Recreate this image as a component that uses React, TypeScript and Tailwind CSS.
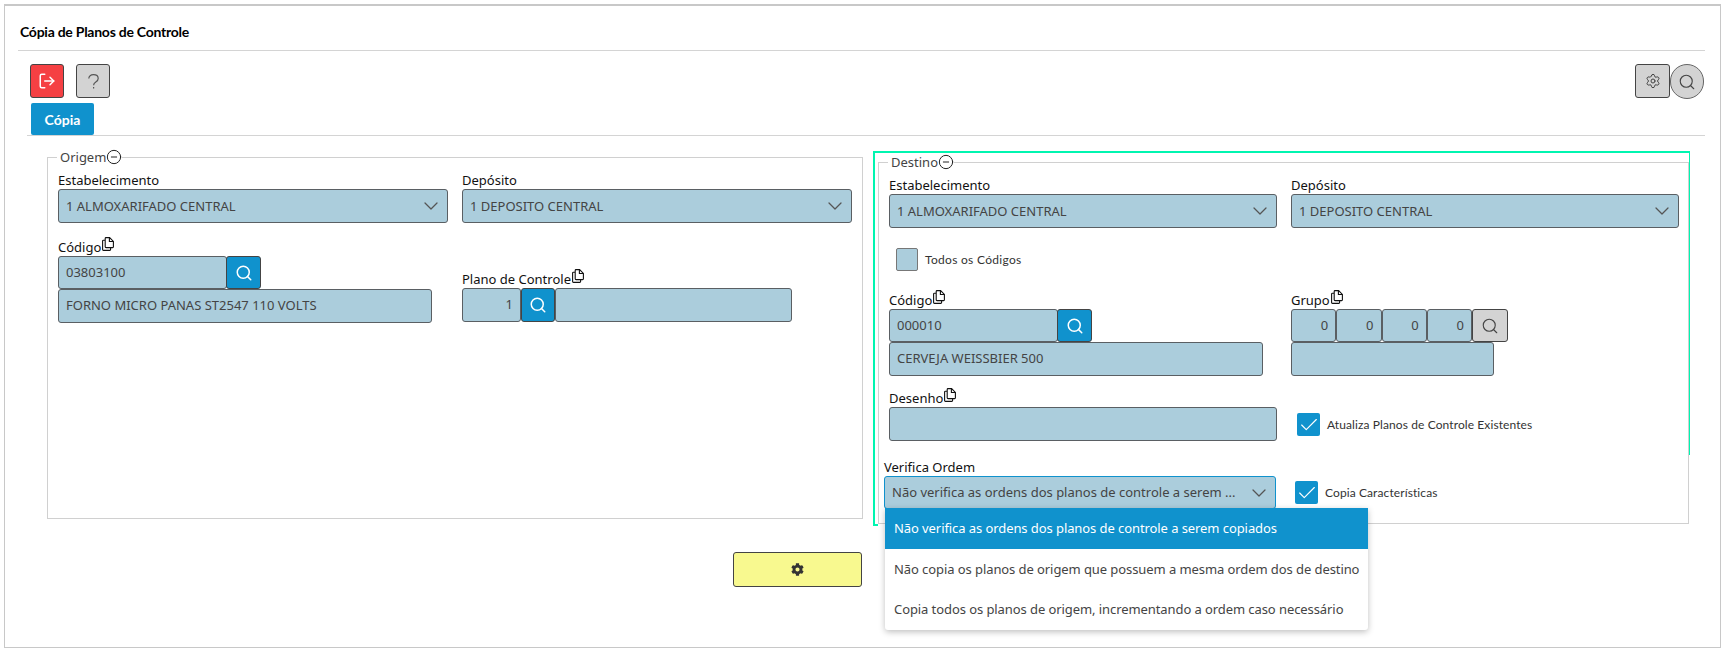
import { ChevronDown, CircleMinus, LogOut, Search, Settings, Check } from "lucide-react";
import { FaCog } from "react-icons/fa";
import type { ReactNode } from "react";

const inputBase =
  "flex shrink-0 items-center border border-[#5a5f63] bg-[#abcddc] text-[13px] text-[#444] rounded-[3px] px-[7px]";

function CopyIcon() {
  return (
    <svg viewBox="0 0 12 14" className="mb-[5px] ml-[1px] h-[14px] w-[12px]" fill="none" stroke="#111" strokeWidth="1.1">
      <path d="M3 3.2H1.4a.8.8 0 0 0-.8.8v8.6a.8.8 0 0 0 .8.8h6.4a.8.8 0 0 0 .8-.8v-1.8" />
      <path d="M3.2 1.4a.8.8 0 0 1 .8-.8h3.6l3.8 3.8v5.4a.8.8 0 0 1-.8.8H4a.8.8 0 0 1-.8-.8Z" />
      <path d="M7.4.6v3.9h3.9" />
    </svg>
  );
}

function Label({ children, copy }: { children: ReactNode; copy?: boolean }) {
  return (
    <div className="flex h-[18px] items-end text-[13px] leading-[18px] text-[#111]">
      <span>{children}</span>
      {copy && <CopyIcon />}
    </div>
  );
}

function SelectBox({ value, width }: { value: string; width: string }) {
  return (
    <div className={`${inputBase} ${width} h-[34px] justify-between`}>
      <span className="pt-[1px]">{value}</span>
      <ChevronDown className="-mr-[3px] h-[24px] w-[24px] text-[#555]" strokeWidth={1.25} />
    </div>
  );
}

function SearchButton({ className }: { className: string }) {
  return (
    <div
      className={`flex shrink-0 items-center justify-center rounded-[3px] border border-[#444] bg-[#1092cd] text-white ${className}`}
    >
      <Search className="h-[18px] w-[18px]" strokeWidth={2} />
    </div>
  );
}

function CheckRow({
  label,
  checked,
  className,
  textClass = "tracking-[0.1px]",
}: {
  label: string;
  checked?: boolean;
  className: string;
  textClass?: string;
}) {
  return (
    <div className={`flex items-center gap-[7px] font-['Lato',sans-serif] text-[12px] text-[#333] ${className}`}>
      {checked ? (
        <div className="flex h-[23px] w-[23px] items-center justify-center rounded-[2px] bg-[#1092cd]">
          <Check className="h-[22px] w-[22px] text-white" strokeWidth={1.25} />
        </div>
      ) : (
        <div className="h-[23px] w-[22px] rounded-[2px] border border-[#777] bg-[#abcddc]" />
      )}
      <span className={textClass}>{label}</span>
    </div>
  );
}

function Legend({ children }: { children: string }) {
  return (
    <legend className="-ml-px flex h-[16px] items-center pl-[3px] text-[13px] leading-[16px] text-[#444]">
      <span>{children}</span>
      <CircleMinus className="h-[16px] w-[16px] text-[#222]" strokeWidth={1.5} />
    </legend>
  );
}

export default function App() {
  return (
    <div className="relative h-[651px] w-[1723px] overflow-hidden bg-white pl-[4px] pt-[4px] font-['Noto_Sans',sans-serif]">
      <div className="h-[644px] w-[1717px] border border-t-2 border-[#c8c8c8]">
        <div className="ml-[13px] mr-[15px] flex h-[45px] items-center border-b border-[#d4d4d4] pl-[2px] pt-[7px] font-['Lato',sans-serif] text-[14px] font-bold tracking-[-0.25px] text-black">
          Cópia de Planos de Controle
        </div>

        <div className="mt-[13px] flex h-[34px] justify-between pl-[25px] pr-[16px]">
          <div className="flex gap-[12px]">
            <div className="flex h-[34px] w-[34px] items-center justify-center rounded-[3px] border border-[#444] bg-[#f54043] text-white">
              <LogOut className="h-[18px] w-[18px]" strokeWidth={2} />
            </div>
            <div className="flex h-[34px] w-[34px] items-center justify-center rounded-[3px] border border-[#444] bg-[#d3d3d3]">
              <svg viewBox="0 0 11 15" className="h-[15px] w-[11px]" fill="none" stroke="#555" strokeWidth="1.2">
                <path d="M.8 4.4C.8 2 2.8.7 5.4.7c2.7 0 4.8 1.5 4.8 3.7 0 1.8-1 2.6-2.4 3.5C6.300 8.900 5.600 9.700 5.600 11.200" />
                <path d="M5.600 13v1.500" />
              </svg>
            </div>
          </div>
          <div className="flex">
            <div className="flex h-[34px] w-[35px] items-center justify-center rounded-[3px] border border-[#444] bg-[#d3d3d3] text-[#444]">
              <Settings className="h-[16px] w-[16px]" strokeWidth={1.5} />
            </div>
            <div className="flex h-[35px] w-[34px] items-center justify-center rounded-full border border-[#666] bg-[#d3d3d3] text-[#444]">
              <Search className="h-[18px] w-[18px]" strokeWidth={1.5} />
            </div>
          </div>
        </div>

        <div className="ml-[22px] mr-[15px] mt-[5px] h-[33px] border-b border-[#d4d4d4] pl-[4px]">
          <div className="flex h-[32px] w-[63px] items-center justify-center rounded-[2px] bg-[#1092cd] font-['Lato',sans-serif] text-[14px] font-bold text-white">
            Cópia
          </div>
        </div>

        <div className="relative ml-[42px] mt-[13px] flex items-start gap-[15px]">
          {/* Origem */}
          <fieldset className="h-[370px] w-[816px] border border-[#d0d0d0] pl-[10px]">
            <Legend>Origem</Legend>
            <div className="mt-[6px] flex gap-[14px]">
              <div>
                <Label>Estabelecimento</Label>
                <SelectBox value="1 ALMOXARIFADO CENTRAL" width="w-[390px]" />
              </div>
              <div>
                <Label>Depósito</Label>
                <SelectBox value="1 DEPOSITO CENTRAL" width="w-[390px]" />
              </div>
            </div>
            <div className="mt-[13px] flex">
              <div className="w-[404px]">
                <div className="mt-[2px]">
                  <Label copy>Código</Label>
                </div>
                <div className="flex">
                  <div className={`${inputBase} h-[33px] w-[169px]`}>03803100</div>
                  <SearchButton className="-ml-px h-[33px] w-[35px]" />
                </div>
                <div className={`${inputBase} h-[34px] w-[374px]`}>FORNO MICRO PANAS ST2547 110 VOLTS</div>
              </div>
              <div className="pt-[34px]">
                <Label copy>Plano de Controle</Label>
                <div className="flex">
                  <div className={`${inputBase} h-[34px] w-[59px] justify-end`}>1</div>
                  <SearchButton className="h-[34px] w-[34px]" />
                  <div className={`${inputBase} h-[34px] w-[237px]`} />
                </div>
              </div>
            </div>
          </fieldset>

          {/* Destino */}
          <fieldset className="mt-[5px] h-[370px] w-[811px] border border-[#d0d0d0] pl-[10px]">
            <Legend>Destino</Legend>
            <div className="mt-[6px] flex gap-[14px]">
              <div>
                <Label>Estabelecimento</Label>
                <SelectBox value="1 ALMOXARIFADO CENTRAL" width="w-[388px]" />
              </div>
              <div>
                <Label>Depósito</Label>
                <SelectBox value="1 DEPOSITO CENTRAL" width="w-[388px]" />
              </div>
            </div>
            <CheckRow label="Todos os Códigos" className="ml-[7px] mt-[20px]" textClass="tracking-[0.3px]" />
            <div className="mt-[20px] flex">
              <div className="w-[402px]">
                <Label copy>Código</Label>
                <div className="flex">
                  <div className={`${inputBase} h-[33px] w-[169px]`}>000010</div>
                  <SearchButton className="-ml-px h-[33px] w-[35px]" />
                </div>
                <div className={`${inputBase} h-[34px] w-[374px]`}>CERVEJA WEISSBIER 500</div>
              </div>
              <div>
                <Label copy>Grupo</Label>
                <div className="flex">
                  {["a", "b", "c", "d"].map((k) => (
                    <div key={k} className={`${inputBase} h-[33px] w-[45.25px] justify-end`}>
                      0
                    </div>
                  ))}
                  <div className="flex h-[33px] w-[36px] items-center justify-center rounded-[3px] border border-[#444] bg-[#d3d3d3] text-[#444]">
                    <Search className="h-[18px] w-[18px]" strokeWidth={1.5} />
                  </div>
                </div>
                <div className={`${inputBase} h-[34px] w-[203px]`} />
              </div>
            </div>
            <div className="mt-[13px] flex items-end">
              <div>
                <Label copy>Desenho</Label>
                <div className={`${inputBase} h-[34px] w-[388px]`} />
              </div>
              <CheckRow label="Atualiza Planos de Controle Existentes" checked className="mb-[5px] ml-[20px]" />
            </div>
          </fieldset>

          {/* Verifica Ordem fica sobre a borda do fieldset */}
          <div className="absolute left-[837px] top-[309px]">
            <div className="flex items-end">
              <div>
                <div className="h-[18px] text-[13px] leading-[18px] text-[#111]">Verifica Ordem</div>
                <div className={`${inputBase} h-[33px] w-[392px] justify-between border-[#1092cd]`}>
                  <span className="whitespace-nowrap">Não verifica as ordens dos planos de controle a serem ...</span>
                  <ChevronDown className="-mr-[3px] h-[24px] w-[24px] shrink-0 text-[#555]" strokeWidth={1.25} />
                </div>
              </div>
              <CheckRow label="Copia Características" checked className="mb-[5px] ml-[19px]" />
            </div>
          </div>
        </div>

        <div className="ml-[728px] mt-[28px] flex h-[35px] w-[129px] items-center justify-center rounded-[3px] border border-[#444] bg-[#f8f98f] text-[#333]">
          <FaCog className="h-[13px] w-[13px]" />
        </div>
      </div>

      {/* destaque verde */}
      <div className="pointer-events-none absolute left-[873px] top-[151px] h-[304px] w-[817px] border-r border-t-2 border-[#00f5b0]" />
      <div className="pointer-events-none absolute left-[873px] top-[151px] h-[375px] w-[5px] border-b-2 border-l-2 border-[#00f5b0]" />

      {/* dropdown aberto */}
      <div className="absolute left-[885px] top-[508px] w-[483px] whitespace-nowrap rounded-b-[3px] bg-white text-[13px] tracking-[-0.08px] text-[#444] shadow-[0_2px_6px_rgba(0,0,0,0.25)]">
        <div className="flex h-[41px] items-center bg-[#1092cd] px-[9px] text-white">
          Não verifica as ordens dos planos de controle a serem copiados
        </div>
        <div className="flex h-[41px] items-center px-[9px]">
          Não copia os planos de origem que possuem a mesma ordem dos de destino
        </div>
        <div className="flex h-[40px] items-center px-[9px]">
          Copia todos os planos de origem, incrementando a ordem caso necessário
        </div>
      </div>
    </div>
  );
}
